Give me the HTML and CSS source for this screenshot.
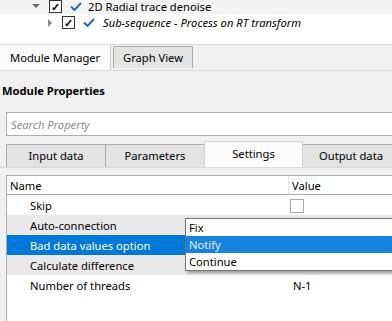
FILE: index.html
```html
<!DOCTYPE html>
<html lang="en">
<head>
  <meta charset="UTF-8">
  <title>Module Properties</title>
  <link rel="stylesheet" href="styles.css">
</head>
<body>
  <div class="tree">
    <div class="tree-row level1 hover">
      <span class="arrow down"></span>
      <span class="box">&#10003;</span>
      <svg class="tick" width="12" height="9" viewBox="0 0 12 9"><path d="M1 4.5 L4.5 8 L11 1" fill="none" stroke="#1f6fc5" stroke-width="2"/></svg>
      <span class="label">2D Radial trace denoise</span>
    </div>
    <div class="tree-row level2">
      <span class="arrow right"></span>
      <span class="box">&#10003;</span>
      <svg class="tick" width="12" height="9" viewBox="0 0 12 9"><path d="M1 4.5 L4.5 8 L11 1" fill="none" stroke="#1f6fc5" stroke-width="2"/></svg>
      <span class="label italic">Sub-sequence - Process on RT transform</span>
    </div>
  </div>

  <div class="main-tabs">
    <div class="main-tab active">Module Manager</div>
    <div class="main-tab">Graph View</div>
  </div>

  <div class="panel">
    <div class="panel-title">Module Properties</div>
    <div class="search"><span class="placeholder">Search Property</span></div>

    <div class="tabs">
      <div class="tab input">Input data</div>
      <div class="tab params">Parameters</div>
      <div class="tab active">Settings</div>
      <div class="tab output">Output data</div>
    </div>

    <div class="pane">
      <div class="table">
        <div class="thead">
          <div class="col-name">Name</div>
          <div class="col-value">Value</div>
        </div>
        <div class="trow">
          <div class="col-name">Skip</div>
          <div class="col-value"><span class="check"></span></div>
        </div>
        <div class="trow alt">
          <div class="col-name">Auto-connection</div>
          <div class="col-value"></div>
        </div>
        <div class="trow selected">
          <div class="col-name">Bad data values option</div>
          <div class="col-value"></div>
        </div>
        <div class="trow alt">
          <div class="col-name">Calculate difference</div>
          <div class="col-value"></div>
        </div>
        <div class="trow">
          <div class="col-name">Number of threads</div>
          <div class="col-value">N-1</div>
        </div>

        <div class="popup">
          <div class="item">Fix</div>
          <div class="item current">Notify</div>
          <div class="item">Continue</div>
        </div>
      </div>
    </div>
  </div>
</body>
</html>
```
FILE: styles.css
```css
* {
  box-sizing: border-box;
}
body {
  margin: 0;
  width: 392px;
  height: 321px;
  overflow: hidden;
  background: #f0f0f0;
  font-family: "Noto Sans", "Open Sans", sans-serif;
  font-size: 11.2px;
  color: #000;
}

/* tree at the top */
.tree {
  background: #fff;
  height: 48px;
  margin-top: -3px;
  border-bottom: 1px solid #dadada;
}
.tree-row {
  height: 17px;
  display: flex;
  align-items: center;
}
.tree-row.hover {
  background: #f3f3f3;
  padding-top: 1px;
}
.level1 {
  padding-left: 30px;
}
.level2 {
  padding-left: 44px;
}
.arrow {
  width: 12px;
  height: 12px;
  position: relative;
}
.arrow.down::after {
  content: "";
  position: absolute;
  left: 2px;
  top: 4px;
  border-left: 4px solid transparent;
  border-right: 4px solid transparent;
  border-top: 4px solid #6d6d6d;
}
.arrow.right::after {
  content: "";
  position: absolute;
  left: 4px;
  top: 2px;
  border-top: 4px solid transparent;
  border-bottom: 4px solid transparent;
  border-left: 4px solid #8a8a8a;
}
.box {
  width: 13px;
  height: 13px;
  border: 1px solid #333;
  background: #fff;
  font-size: 11px;
  line-height: 11px;
  text-align: center;
  font-weight: bold;
  margin-left: 7px;
}
.level2 .box {
  margin-left: 6px;
}
.tick {
  margin-left: 8px;
}
.label {
  margin-left: 6px;
  white-space: nowrap;
}
.level2 .label {
  margin-left: 8px;
}
.italic {
  font-style: italic;
}

/* Module Manager / Graph View */
.main-tabs {
  display: flex;
  align-items: flex-start;
  height: 26px;
  border-bottom: 1px solid #dadada;
}
.main-tab {
  height: 22px;
  line-height: 21px;
  padding: 0 9px;
  margin-top: 1px;
  margin-left: 2px;
  white-space: nowrap;
  background: #e4e4e4;
  border: 1px solid #acacac;
  border-bottom: none;
  border-radius: 2px 2px 0 0;
}
.main-tab.active {
  height: 25px;
  line-height: 25px;
  margin: 0;
  width: 111px;
  padding-left: 10px;
  background: #fbfbfb;
  border: none;
  border-right: 1px solid #d0d0d0;
  border-radius: 0;
}

/* properties panel */
.panel-title {
  font-weight: bold;
  padding: 12px 0 0 2px;
  height: 41px;
  line-height: 16px;
}
.search {
  margin-left: 6px;
  height: 24px;
  background: #fff;
  border: 1px solid #abadb3;
  border-right: none;
  display: flex;
  align-items: center;
  padding-left: 4px;
}
.placeholder {
  font-style: italic;
  color: #8c8c8c;
}

.tabs {
  display: flex;
  align-items: flex-end;
  margin: 5px 0 0 6px;
  height: 26px;
}
.tab {
  flex-shrink: 0;
  height: 23px;
  line-height: 22px;
  text-align: center;
  white-space: nowrap;
  background: #e3e3e3;
  border: 1px solid #acacac;
  border-left: none;
  border-bottom: none;
}
.tab.input {
  width: 100px;
  border-left: 1px solid #acacac;
}
.tab.params {
  width: 99px;
}
.tab.output {
  width: 99px;
}
.tab.active {
  width: 99px;
  margin-left: -1px;
  margin-right: -1px;
  height: 26px;
  line-height: 24px;
  background: #fcfcfc;
  border: 1px solid #d0d0d0;
  border-bottom: none;
  border-radius: 2px 2px 0 0;
  position: relative;
}

.pane {
  border-top: 1px solid #d9d9d9;
  padding: 7px 0 0 6px;
}
.table {
  position: relative;
  background: #fff;
  border: 1px solid #adadad;
  border-right: none;
  height: 160px;
}
.thead,
.trow {
  display: flex;
  height: 20px;
  line-height: 21px;
}
.thead {
  height: 19px;
  line-height: 19px;
  border-bottom: 1px solid #a8a8a8;
}
.thead .col-name {
  padding-left: 3px;
  width: 282px;
  border-right: 1px solid #e3e3e3;
}
.thead .col-value {
  padding-left: 3px;
}
.trow .col-name {
  padding-left: 23px;
  width: 282px;
}
.trow .col-value {
  padding-left: 4px;
}
.trow.alt {
  background: #e9e9e9;
}
.trow.selected {
  background: #0078d7;
  color: #fff;
}
.check {
  display: inline-block;
  width: 14px;
  height: 14px;
  border: 1px solid #a8a8a8;
  background: #fff;
  vertical-align: middle;
  margin-top: -3px;
  margin-left: -3px;
}

/* combo popup */
.popup {
  position: absolute;
  left: 178px;
  top: 42px;
  width: 230px;
  background: #fff;
  border: 1px solid #767676;
  box-shadow: 2px 2px 3px rgba(0, 0, 0, 0.35);
}
.popup .item {
  height: 17px;
  line-height: 17px;
  padding-left: 3px;
}
.popup .item.current {
  background: #1683dc;
  color: #e8f0f8;
}
```
